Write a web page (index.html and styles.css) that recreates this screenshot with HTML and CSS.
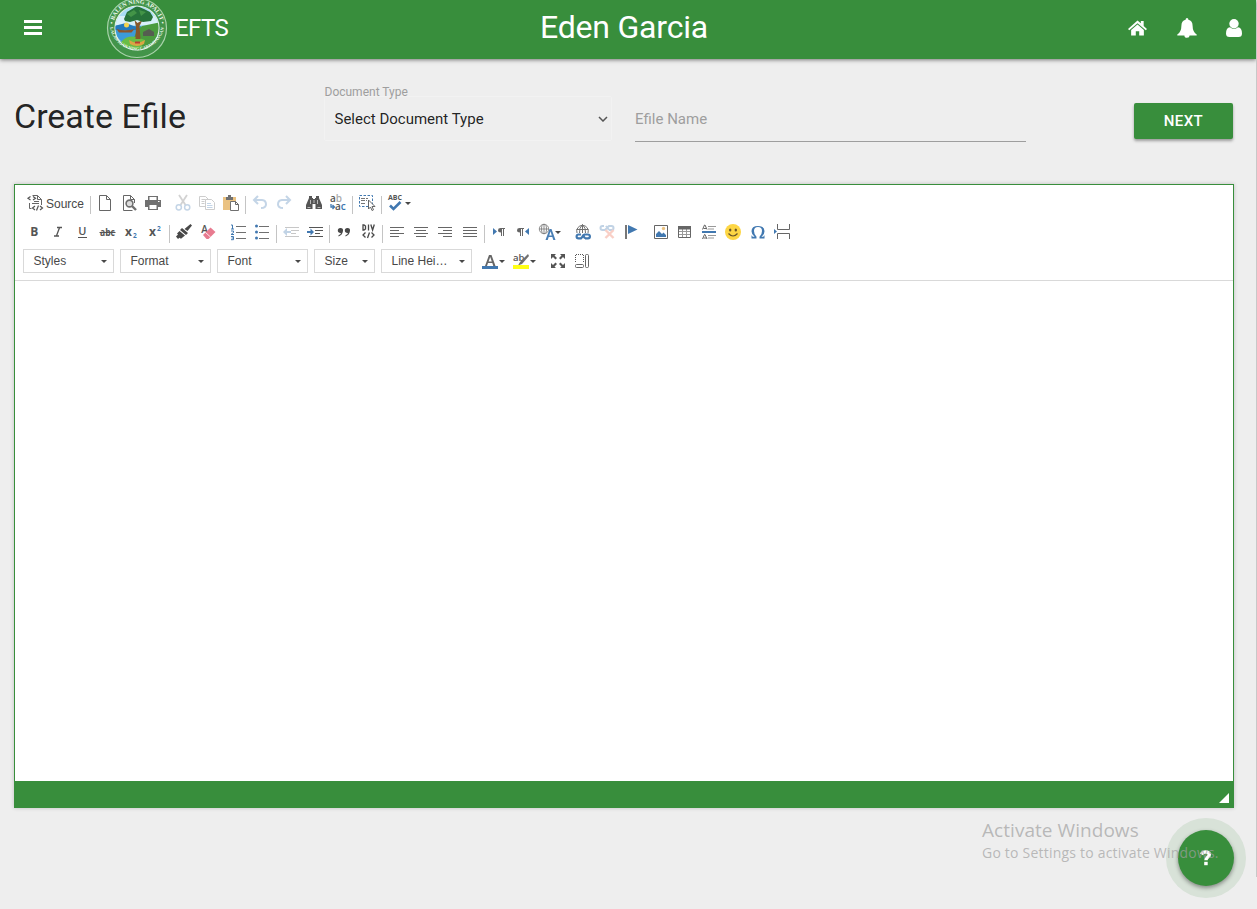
FILE: index.html
```html
<!DOCTYPE html>
<html lang="en">
<head>
<meta charset="utf-8">
<title>EFTS</title>
<link rel="stylesheet" href="styles.css">
</head>
<body>
<div class="scroll-edge"></div>
<header class="navbar">
  <div class="nav-left">
    <svg class="menu" viewBox="0 0 18 15"><path fill="#fff" d="M0 0h18v3H0zM0 6h18v3H0zM0 12h18v3H0z"/></svg>
    <svg class="logo" viewBox="0 0 62 62">
      <defs>
        <clipPath id="disc"><circle cx="31" cy="31" r="21.5"/></clipPath>
        <path id="arcTop" d="M8.2 38a24 24 0 1 1 45.600 0"/>
        <path id="arcBottom" d="M3.600 28a27.500 27.500 0 0 0 54.800 0"/>
      </defs>
      <circle cx="31" cy="31" r="29.500" fill="#43944a" stroke="#a9d3ab" stroke-width="1.200"/>
      <circle cx="31" cy="31" r="22" fill="#a9dcf5" stroke="#e2f1e2" stroke-width="1.200"/>
      <g clip-path="url(#disc)">
        <path fill="#d8f0fa" d="M8 19h46v9H8z"/>
        <path fill="#3c9bd8" d="M8 29h27v25H8z"/>
        <path fill="#2479bd" d="M8 29l12-3 10 4v3H8z"/>
        <circle cx="20.500" cy="28" r="2.500" fill="#f5d34f"/>
        <path fill="#4b9b3e" d="M31 33l5-4 20-4v28H24l4-12z"/>
        <path fill="#68bd45" d="M15 45q6-7 15-5l9 3-6 11H19z"/>
        <path fill="#8c552c" d="M10.500 32q8 2.500 18 0l-3 3.500H13z"/>
        <path fill="#555d50" d="M37 35l6-3 5 3v4H37z"/>
        <path fill="#86572b" d="M28.500 23l3 3 5-3-3 6 1 13h-5l.5-12z"/>
        <path fill="#27733a" d="M18 22l3-7 5-3 5-3 7 3 6 3 3 5-2 4-8 1-6-2-7 2-5-1z"/>
        <path fill="#439447" d="M21 17l7-4 3 3-6 4zM33 13l7 2-5 4z"/>
        <path fill="#dba544" d="M23 43l4 2q4 1 8 0l4-2-1 4q-7 4-14 0z"/>
        <path fill="#b93e32" d="M29 44.500h5v2h-5z"/>
      </g>
      <text class="seal-text"><textPath href="#arcTop" startOffset="50%" text-anchor="middle">• BALEN NING APALIT •</textPath></text>
      <text class="seal-text seal-small"><textPath href="#arcBottom" startOffset="50%" text-anchor="middle">LALAWIGAN NING CAPAMPANGAN</textPath></text>
    </svg>
    <span class="brand">EFTS</span>
  </div>
  <div class="user-name">Eden Garcia</div>
  <nav class="nav-right">
    <svg class="nav-home" viewBox="0 0 20 16"><g fill="#fff"><path d="M10 0L0 9l1.300 1.400L10 3l8.700 7.400L20 9l-3.500-3.100V.5h-3V3z"/><path d="M3.300 10L10 4.300l6.700 5.700v6H11.800v-4.500H8.200V16H3.300z"/></g></svg>
    <svg class="nav-bell" viewBox="0 0 20 20"><path fill="#fff" d="M10 0q1.400 0 1.400 1.800 4.200 1 4.200 6 0 6 4.100 8.700v1H12.600q0 2.300-2.600 2.300t-2.600-2.300H.3v-1q4.100-2.700 4.100-8.700 0-5 4.200-6Q8.600 0 10 0z"/></svg>
    <svg class="nav-user" viewBox="0 0 16 18"><path fill="#fff" d="M4 8.200Q0 8.700 0 14.500 0 18 3.500 18h9q3.500 0 3.500-3.500 0-5.800-4-6.300-4 3.400-8 0z"/><circle cx="8" cy="4.700" r="4.700" fill="#fff"/></svg>
  </nav>
</header>

<main class="page">
  <section class="form-row">
    <h1 class="title">Create Efile</h1>
    <div class="doc-type">
      <label class="label">Document Type</label>
      <div class="select"><span>Select Document Type</span>
        <svg class="chevron" viewBox="0 0 10 6"><path d="M1 1l4 4 4-4" fill="none" stroke="#555" stroke-width="1.500"/></svg>
      </div>
    </div>
    <div class="file-name">Efile Name</div>
    <button class="next">NEXT</button>
  </section>

  <section class="editor">
    <div class="toolbar">
      <div class="row">
        <span class="btn source"><svg class="ic" viewBox="0 0 16 16"><path d="M5.500.5h5l4 4V10M10.500.5v4h4M2.500 8v5.500h2M7 6.500h5M5 8.500h7" class="ln"/><path d="M3.500 1.500L1 3.200l2.500 1.700M6 1.500l2.500 1.700L6 4.900M8 11l-2.500 2L8 15M13 11l2.500 2-2.500 2M11.500 10.500l-2 5" fill="none" stroke="#555" stroke-width="1.200"/></svg><span class="source-text">Source</span></span>
        <i class="sep"></i>
        <span class="btn"><svg class="ic" viewBox="0 0 16 16"><path class="ln" d="M2.500.5h7l4 4v11h-11zM9.500.5v4h4"/></svg></span>
        <span class="btn"><svg class="ic" viewBox="0 0 16 16"><path class="ln" d="M13.500 8V4.500l-4-4h-7v15h9M9.500.5v4h4"/><circle cx="8.500" cy="8.500" r="3.400" fill="#ddd" stroke="#707070" stroke-width="1.600"/><path d="M11 11l4 4" stroke="#707070" stroke-width="2.400"/></svg></span>
        <span class="btn"><svg class="ic" viewBox="0 0 16 16"><path fill="#707070" d="M3 1h10v4H3zM0 5h16v7h-3v3H3v-3H0z"/><path fill="#fff" d="M4.500 2h7v3h-7zM4.500 10h7v4h-7zM13 6h1.500v1H13z"/></svg></span>
        <i class="gap"></i>
        <span class="btn faded"><svg class="ic" viewBox="0 0 16 16"><path d="M4 0l6.500 10M12 0L5.500 10" stroke="#777" stroke-width="1.800"/><g fill="none" stroke="#4a7fb5" stroke-width="1.500"><circle cx="3.800" cy="12.300" r="2.600"/><circle cx="12.200" cy="12.300" r="2.600"/></g></svg></span>
        <span class="btn faded"><svg class="ic" viewBox="0 0 16 16"><path class="ln" d="M6 11.500H.5v-10h6l3 3M2.500 4.500h4M2.500 6.500h3M2.500 8.500h3M6.500 4.500h6l3 3v7h-9z"/><path d="M8 8.500h4M8 10.500h5.500M8 12.500h5.500" stroke="#4a7fb5"/></svg></span>
        <span class="btn"><svg class="ic" viewBox="0 0 16 16"><path fill="#eac282" d="M0 2h13v13H0z"/><path fill="#707070" d="M3 2h2V0h3v2h2v3H3z"/><path d="M7.500 6.500h5l3 3v6h-8z" fill="#fff" stroke="#707070"/><path class="ln" d="M12.500 6.500v3h3"/></svg></span>
        <i class="sep"></i>
        <span class="btn faded"><svg class="ic" viewBox="0 0 16 16"><path d="M2 5h8q4 .5 4 4.200Q14 13 9 13" fill="none" stroke="#4a7fb5" stroke-width="2"/><path d="M6 1L2 5l4 4" fill="none" stroke="#4a7fb5" stroke-width="2"/></svg></span>
        <span class="btn faded"><svg class="ic" viewBox="0 0 16 16"><path d="M14 5H6Q2 5.500 2 9.200 2 13 7 13" fill="none" stroke="#4a7fb5" stroke-width="2"/><path d="M10 1l4 4-4 4" fill="none" stroke="#4a7fb5" stroke-width="2"/></svg></span>
        <i class="gap"></i>
        <span class="btn"><svg class="ic" viewBox="0 0 16 16"><path fill="#555" d="M3 1h3v2h1v1h2V3h1V1h3v2l3 7v4H9.500V9h-3v5H0v-4l3-7z"/><path stroke="#fff" stroke-width=".6" d="M1.500 12.500h3M11.500 12.500h3M4.500 5v4M11.500 5v4M8 5v3"/></svg></span>
        <span class="btn"><svg class="ic" viewBox="0 0 16 16"><text x="0" y="7" class="g rep">a<tspan fill="#aaa">b</tspan></text><text x="5" y="15.300" class="g rep">a<tspan fill="#4178b0">c</tspan></text><path d="M1 9v3h3M2.500 10L4.500 12l-2 2" fill="none" stroke="#4178b0" stroke-width="1.300"/></svg></span>
        <i class="sep"></i>
        <span class="btn"><svg class="ic" viewBox="0 0 16 16"><path d="M.5.5h13v11H.5z" fill="none" stroke="#4178b0" stroke-dasharray="2.500 1.500"/><path d="M2 3.500h7M2 5.500h6M2 8.500h5" stroke="#777" stroke-dasharray="4 1"/><path d="M9.500 5v9l2-2 1.500 3.500 1.500-.7-1.500-3.300H16z" fill="#fff" stroke="#666"/></svg></span>
        <i class="sep"></i>
        <span class="btn drop"><svg class="ic" viewBox="0 0 16 16"><text x="0" y="5" class="g abc" textLength="14" lengthAdjust="spacingAndGlyphs">ABC</text><path d="M2 10.500l3.500 3.500L12.500 7" fill="none" stroke="#4178b0" stroke-width="2.600"/></svg><b class="arrow"></b></span>
      </div>

      <div class="row">
        <span class="btn"><svg class="ic" viewBox="0 0 16 16"><text x="8.300" y="12.300" class="g bold">B</text></svg></span>
        <span class="btn"><svg class="ic" viewBox="0 0 16 16"><path d="M7 3.500h5M4 12h5M9.600 3.500L6.400 12" fill="none" stroke="#555" stroke-width="1.300"/></svg></span>
        <span class="btn"><svg class="ic" viewBox="0 0 16 16"><text x="8.300" y="11" class="g under">U</text><path d="M4 13.500h9" stroke="#555"/></svg></span>
        <span class="btn"><svg class="ic" viewBox="0 0 16 16"><text x="8.500" y="11.700" class="g strike" textLength="15" lengthAdjust="spacingAndGlyphs">abc</text><path d="M.5 8.500h16" stroke="#555"/></svg></span>
        <span class="btn"><svg class="ic" viewBox="0 0 16 16"><text x="5.500" y="12" class="g bold">x</text><text x="11.800" y="14" class="g tiny">2</text></svg></span>
        <span class="btn"><svg class="ic" viewBox="0 0 16 16"><text x="5.500" y="12" class="g bold">x</text><text x="11.800" y="6.500" class="g tiny">2</text></svg></span>
        <i class="sep"></i>
        <span class="btn"><svg class="ic" viewBox="0 0 16 16"><path fill="#484848" d="M14.500 0L16 1.500 11.500 7l-3-2zM6 4l6 5-2 2-6-5zM3.500 7l5.500 4.500-2.500 2L5 14.800l-1.500-1L2 15 0 12.500l2-2-1-1z"/></svg></span>
        <span class="btn"><svg class="ic" viewBox="0 0 16 16"><text x="4.500" y="8.500" class="g letter">A</text><path fill="#e87b90" d="M10.500 3.500l5 4.500-7 7h-2L3 11z"/><path stroke="#fff" stroke-width=".8" d="M5.500 8.500l5 4.500"/></svg></span>
        <i class="gap"></i>
        <span class="btn"><svg class="ic" viewBox="0 0 16 16"><path stroke="#707070" d="M6 2.500h10M6 8.500h10M6 14.500h10"/><path d="M1 1h1.500v4M1 5h3M1 7h2.500v1.500L1 10.500h3M1 12.500h2.500v3.200H1M1.500 14h2" fill="none" stroke="#4178b0"/></svg></span>
        <span class="btn"><svg class="ic" viewBox="0 0 16 16"><path stroke="#707070" d="M5 2.500h10M5 8.500h10M5 14.500h10"/><g fill="#4178b0"><circle cx="2.500" cy="2" r="1.500"/><circle cx="2.500" cy="8" r="1.500"/><circle cx="2.500" cy="14" r="1.500"/></g></svg></span>
        <i class="sep"></i>
        <span class="btn faded"><svg class="ic" viewBox="0 0 16 16"><path stroke="#555" d="M2 3.500h14M8 6.500h8M8 9.500h5M2 12.500h14"/><path fill="#4178b0" d="M0 8l4-4v3h4v2H4v3z"/></svg></span>
        <span class="btn"><svg class="ic" viewBox="0 0 16 16"><path stroke="#555" d="M2 3.500h14M8 6.500h8M8 9.500h5M2 12.500h14"/><path fill="#4178b0" d="M7 8L3.500 4.500V7H0v2h3.500v2.500z"/></svg></span>
        <i class="sep"></i>
        <span class="btn"><svg class="ic" viewBox="0 0 16 16"><path fill="#484848" d="M4.500 4a2.600 2.600 0 0 1 2.500 3Q6.500 11 2.500 12.500v-1.200Q4.800 10.300 5 9 1.800 9.200 1.800 6.600A2.600 2.600 0 0 1 4.500 4zM11.500 4A2.600 2.600 0 0 1 14 7Q13.500 11 9.500 12.500v-1.200Q11.800 10.300 12 9 8.800 9.200 8.800 6.600A2.600 2.600 0 0 1 11.500 4z"/></svg></span>
        <span class="btn"><svg class="ic" viewBox="0 0 16 16"><path d="M3 1v5h1l1.500-1V2L4 1zM8.500 .500v6M10.800.500l1.800 5.500L14.300 .5M5.500 8.500L3 11l2.500 2.500M11.500 8.500L14 11l-2.500 2.500M9.500 8.500l-2 5.500" fill="none" stroke="#484848" stroke-width="1.300"/></svg></span>
        <i class="sep"></i>
        <span class="btn"><svg class="ic" viewBox="0 0 16 16"><path class="ln" d="M1 3.500h14M1 6.500h9M1 9.500h14M1 12.500h9"/></svg></span>
        <span class="btn"><svg class="ic" viewBox="0 0 16 16"><path class="ln" d="M1 3.500h14M3 6.500h10M1 9.500h14M3 12.500h10"/></svg></span>
        <span class="btn"><svg class="ic" viewBox="0 0 16 16"><path class="ln" d="M1 3.500h14M6 6.500h9M1 9.500h14M6 12.500h9"/></svg></span>
        <span class="btn"><svg class="ic" viewBox="0 0 16 16"><path class="ln" d="M1 3.500h14M1 6.500h14M1 9.500h14M1 12.500h14"/></svg></span>
        <i class="sep"></i>
        <span class="btn"><svg class="ic" viewBox="0 0 16 16"><path fill="#4178b0" d="M2 4l4 3.500L2 11z"/><path fill="#666" d="M14 4v1h-1v7h-1V5h-1v7h-1V8.500Q7 8.400 7 6.200T9.500 4z"/></svg></span>
        <span class="btn"><svg class="ic" viewBox="0 0 16 16"><path fill="#4178b0" d="M14 4l-4 3.500 4 3.500z"/><path fill="#666" d="M9 4v1H8v7H7V5H6v7H5V8.500Q2 8.400 2 6.200T4.500 4z"/></svg></span>
        <span class="btn drop near"><svg class="ic" viewBox="0 0 16 16"><g fill="none" stroke="#808080" stroke-width=".9"><circle cx="5" cy="5" r="4.700"/><path d="M.500 5h9M5 .5v9"/><ellipse cx="5" cy="5" rx="2.500" ry="4.700"/></g><path d="M6.500 16L10.500 5h2l4 11h-2.200l-1-3H9.700l-1 3z" fill="#4a7fb5"/><path d="M10.200 11.500h2.600l-1.300-4z" fill="#fff"/></svg><b class="arrow"></b></span>
        <span class="btn"><svg class="ic" viewBox="0 0 16 16"><g fill="none" stroke="#707070"><path d="M2 9a5.800 5.800 0 1 1 11 0M1.500 5.500h12M7.500.500V9M4.500 9Q4 4 7.500.500 11 4 10.500 9"/></g><path d="M6 10.500H3.500a1.900 1.900 0 0 0 0 3.800H6L9.500 10.500H13a1.900 1.900 0 0 1 0 3.800h-3M7.500 10.500l2.500 3.800" fill="none" stroke="#4178b0" stroke-width="2.200"/></svg></span>
        <span class="btn faded"><svg class="ic" viewBox="0 0 16 16"><path d="M5 2H3.500a2 2 0 0 0 0 4H6L10 2h2.500a2 2 0 0 1 0 4H10M7 2l3 4" fill="none" stroke="#4178b0" stroke-width="2"/><path d="M6.500 6l8 8M14.500 6l-8 8" stroke="#ee6c50" stroke-width="2.400"/></svg></span>
        <span class="btn"><svg class="ic" viewBox="0 0 16 16"><path d="M2 1h2v14H2z" fill="#777"/><path d="M5 1l9.500 4.500L5 10z" fill="#4178b0"/></svg></span>
        <i class="gap"></i>
        <span class="btn"><svg class="ic" viewBox="0 0 16 16"><path d="M1.500 1.500h13v13h-13z" class="ln"/><path fill="#4178b0" d="M3 13v-3l3-3 3 3 1.500-1.500L13 11v2z"/><circle cx="10.500" cy="4.500" r="1.700" fill="#eac282"/></svg></span>
        <span class="btn"><svg class="ic" viewBox="0 0 16 16"><path d="M1.500 2.500h12v11h-12z" class="ln"/><path d="M2 7.500h11M2 10.500h11M5.500 5v8M9.500 5v8" stroke="#999"/><path fill="#666" d="M1 2h13v3.500H1z"/></svg></span>
        <span class="btn"><svg class="ic" viewBox="0 0 16 16"><path d="M7 2.500h8M7 5h6M7 11.500h8M7 14h6" stroke="#999"/><path fill="#4178b0" d="M1 7h14v2H1z"/><path d="M1.500 5.500l2-4.500h.5L6 5.500M2.500 4.500h3M1.500 15l2-4.500h.5L6 15M2.500 14h3" class="ln"/></svg></span>
        <span class="btn"><svg class="ic" viewBox="0 0 16 16"><circle cx="8" cy="8" r="8" fill="#fdd644"/><ellipse cx="5.200" cy="6" rx="1.200" ry="1.600" fill="#6b5528"/><ellipse cx="10.800" cy="6" rx="1.200" ry="1.600" fill="#6b5528"/><path d="M3.500 9.500q4.500 5 9 0" fill="none" stroke="#6b5528" stroke-width="1.200"/></svg></span>
        <span class="btn"><svg class="ic" viewBox="0 0 16 16"><path fill="#4178b0" d="M1.500 11.500H2l.6 1.200h2Q1.500 10.500 1.500 7.200 1.500 2 8 2t6.500 5.200q0 3.300-3.100 5.500h2l.6-1.200h.5v3H9.500v-1.700q2.500-2.300 2.500-5.800 0-4-4-4t-4 4q0 3.500 2.500 5.800v1.700h-5z"/></svg></span>
        <span class="btn"><svg class="ic" viewBox="0 0 16 16"><path d="M3.500 0v5.500h12V0M3.500 15V9.500h12V15" class="ln"/><path d="M0 5l3 2.500L0 10z" fill="#4178b0"/></svg></span>
      </div>

      <div class="row combos">
        <span class="combo">Styles<b class="arrow"></b></span>
        <span class="combo">Format<b class="arrow"></b></span>
        <span class="combo">Font<b class="arrow"></b></span>
        <span class="combo size">Size<b class="arrow"></b></span>
        <span class="combo">Line Hei…<b class="arrow"></b></span>
        <span class="btn drop"><svg class="ic" viewBox="0 0 16 16"><path fill="#666" d="M3 13L7 2h2.500l4 11h-2.200l-1-3H6l-1 3z"/><path fill="#fff" d="M6.600 8.500h3.200L8.200 4z"/><path fill="#4178b0" d="M0 13h16v3H0z"/></svg><b class="arrow"></b></span>
        <span class="btn drop"><svg class="ic" viewBox="0 0 16 16"><text x="0" y="8" class="g hi">ab</text><path d="M15 1l-8 8-2 3.500 4-1.500 7-8z" fill="#707070"/><path fill="#ffff16" d="M0 12h16v4H0z"/></svg><b class="arrow"></b></span>
        <span class="btn max"><svg class="ic" viewBox="0 0 16 16"><path fill="#555" d="M1 1h5L4.500 2.500 7 5 5.500 6.500 3 4 1 6zM15 1v5l-2-2-2.500 2.500L9 5l2.500-2.500L10 1zM1 15v-5l2 2 2.500-2.500L7 11l-2.500 2.500L6 15zM15 15h-5l1.500-1.500L9 11l1.500-1.500L13 12l2-2z"/></svg></span>
        <span class="btn"><svg class="ic" viewBox="0 0 16 16"><path d="M1.500 9V1.500h8V10" fill="none" stroke="#555" stroke-dasharray="1 1"/><rect x="1.500" y="11.500" width="8" height="3" rx="1" class="ln"/><rect x="11.500" y="1.500" width="3" height="13" rx="1" class="ln"/></svg></span>
      </div>
    </div>
    <div class="content"></div>
    <div class="bottom"><i class="resizer"></i></div>
  </section>
</main>

<button class="fab"><svg viewBox="0 0 12 16"><path d="M1.500 4.300Q2.800 2 5.600 2q3.700 0 3.700 2.800 0 1.700-2 2.700Q6 8.200 6 10.200" fill="none" stroke="#fff" stroke-width="3.500"/><path d="M4.200 11.800h3.500v3.400H4.200z" fill="#fff"/></svg></button>
<aside class="watermark"><div class="wm-title">Activate Windows</div><div class="wm-text">Go to Settings to activate Windows.</div></aside>
</body>
</html>
```

FILE: styles.css
```css
* { box-sizing: border-box; }
body {
  margin: 0;
  height: 909px;
  overflow: hidden;
  background: #eee;
  color: rgba(0, 0, 0, .87);
  font-family: Roboto, sans-serif;
}
.scroll-edge { position: absolute; right: 0; top: 10px; width: 1px; height: 867px; background: #c8c8c8; }

.navbar {
  display: grid;
  grid-template-columns: 1fr auto 1fr;
  width: 1256px;
  height: 59px;
  align-items: center;
  background: #388e3c;
  color: #fff;
  box-shadow: 0 1px 4px rgba(0, 0, 0, .5);
}
.nav-left { display: flex; align-items: center; height: 54px; padding-left: 24px; }
.menu { width: 18px; height: 15px; }
.logo { width: 62px; height: 62px; margin-left: 64px; flex: none; }
.seal-text { font: 700 6px "Liberation Serif", serif; fill: #eef8ee; }
.seal-small { font-size: 4.4px; }
.brand { margin-left: 7px; font-size: 24px; letter-spacing: -.6px; }
.user-name { height: 54px; margin-bottom: 6px; margin-right: 8px; line-height: 54px; font-size: 32px; letter-spacing: -.2px; }
.nav-left, .nav-right { margin-bottom: 5px; }
.nav-right { display: flex; justify-content: flex-end; align-items: center; padding-right: 14px; height: 54px; }
.nav-home { width: 19px; height: 16px; margin-right: 30px; }
.nav-bell { width: 20px; height: 20px; margin-right: 29px; }
.nav-user { width: 16px; height: 18px; }

.page { padding: 0 23px 0 14px; }
.form-row { display: flex; height: 125px; }
.title { width: 310px; margin: 36px 0 0; font-size: 34px; line-height: 42px; font-weight: 400; }
.doc-type { width: 289px; padding-top: 25px; }
.label { display: block; height: 12px; line-height: 16px; padding-left: .5px; font-size: 12px; color: #9e9e9e; }
.select {
  display: flex;
  align-items: center;
  justify-content: space-between;
  width: 288px;
  height: 45px;
  padding: 0 3px 0 9.500px;
  border: 1px solid #f2f2f2;
  border-radius: 2px;
  font-size: 15px;
}
.chevron { width: 10px; height: 6px; }
.file-name {
  width: 391px;
  height: 46px;
  margin: 37px 0 0 22px;
  border-bottom: 1px solid #9e9e9e;
  color: #9e9e9e;
  font-size: 15px;
  line-height: 46px;
}
.next {
  width: 99px;
  height: 36px;
  margin: 44px 1px 0 auto;
  border: 0;
  border-radius: 2px;
  background: #388e3c;
  color: #fff;
  font: 500 15px Roboto, sans-serif;
  letter-spacing: .4px;
  box-shadow: 0 2px 3px rgba(0, 0, 0, .35);
}

.editor { height: 624px; border: 1px solid #388e3c; background: #fff; box-shadow: 0 0 4px rgba(0, 0, 0, .2); }
.toolbar { height: 96px; padding: 4px 0 0 7px; border-bottom: 1px solid #d9d9d9; font: 12px "Liberation Sans", Arial, sans-serif; color: #484848; }
.row { display: flex; align-items: center; height: 28px; margin-bottom: 1px; }
.btn { display: flex; align-items: center; justify-content: center; width: 24.170px; height: 28px; flex: none; }
.source { width: 66px; justify-content: flex-start; padding-left: 5px; gap: 3px; }
.source-text { padding-top: 1px; }
.drop { width: 36px; justify-content: flex-start; padding-left: 4px; gap: 1px; }
.near { gap: 0; }
.faded { opacity: .32; }
.ic { display: block; width: 16px; height: 16px; flex: none; overflow: visible; }
.ln { fill: none; stroke: #666; stroke-width: 1; }
.sep { width: 1px; height: 18px; margin: 3px 1.850px 0 2px; background: #c4c4c4; flex: none; }
.gap { width: 5.500px; flex: none; }
.arrow { width: 0; height: 0; border: 3px solid transparent; border-top-color: #484848; border-bottom: 0; flex: none; }

.g { font: 700 12px "Open Sans", sans-serif; fill: #555; }
.bold, .under, .strike, .tiny, .letter { text-anchor: middle; }
.bold { font-size: 12px; }
.under { font-size: 11px; font-weight: 600; }
.strike { font-size: 10px; }
.rep { font-size: 10px; font-weight: 600; }
.abc { font-size: 6.500px; }
.tiny { font-size: 6.500px; fill: #4178b0; }
.letter { font-size: 10px; font-weight: 600; }
.hi { font-size: 9.500px; font-weight: 600; }

.combos { padding-left: 1px; }
.combo {
  display: flex;
  align-items: center;
  justify-content: space-between;
  width: 91px;
  height: 24px;
  margin-right: 6px;
  padding: 0 6px 0 9.500px;
  border: 1px solid #d9d9d9;
}
.combo.size { width: 61px; }
.combos .drop { width: 31px; }
.combos .max { margin-left: 6px; }

.content { height: 500px; }
.bottom { display: flex; justify-content: flex-end; align-items: flex-end; height: 26px; padding: 0 4px 4px 0; background: #388e3c; }
.resizer { width: 0; height: 0; border-left: 10px solid transparent; border-bottom: 10px solid #fff; }

.fab {
  position: absolute;
  left: 1178px;
  top: 830px;
  display: grid;
  place-items: center;
  width: 56px;
  height: 56px;
  padding: 0;
  border: 0;
  border-radius: 50%;
  background: #388e3c;
  box-shadow: 0 2px 4px rgba(0, 0, 0, .4), 0 0 0 12px rgba(56, 142, 60, .12);
}
.fab svg { width: 12px; height: 16px; }
.watermark { position: absolute; left: 982px; top: 817px; color: rgba(160, 160, 160, .7); font-family: "Open Sans", sans-serif; white-space: nowrap; }
.wm-title { font-size: 19px; line-height: 26px; letter-spacing: .05px; }
.wm-text { font-size: 14px; line-height: 20px; letter-spacing: .21px; }
```
